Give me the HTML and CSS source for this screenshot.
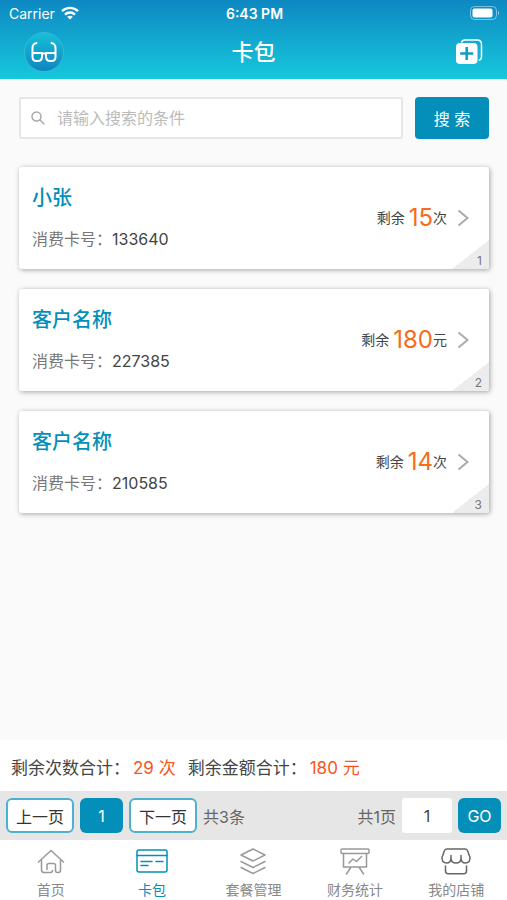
FILE: index.html
```html
<!DOCTYPE html>
<html lang="zh-CN">
<head>
    <meta charset="UTF-8">
    <meta name="viewport" content="width=device-width, initial-scale=1.0">
    <title>卡包</title>
    <link rel="stylesheet" href="styles.css">
</head>
<body>
    <header class="header">
        <div class="status-bar">
            <div class="carrier">
                <span>Carrier</span>
                <svg width="18" height="14" viewBox="0 0 18 14" fill="none" stroke="#fff" stroke-width="2.4">
                    <path d="M1 5.2C5.5 0.8 12.5 0.8 17 5.2"/>
                    <path d="M4 8.6C6.8 5.8 11.2 5.8 14 8.6"/>
                    <path d="M9 13.5L6.2 10.7C7.8 9.3 10.2 9.3 11.8 10.7Z" fill="#fff" stroke="none"/>
                </svg>
            </div>
            <span class="time">6:43 PM</span>
            <svg class="battery" width="30" height="14" viewBox="0 0 30 14">
                <rect x="0.5" y="0.5" width="26" height="13" rx="4" fill="none" stroke="#fff" stroke-opacity="0.45"/>
                <rect x="2.5" y="2.5" width="20" height="9" rx="2" fill="#fff"/>
                <path d="M28 5v4c1.6-0.6 1.6-3.4 0-4z" fill="#fff" fill-opacity="0.5"/>
            </svg>
        </div>
        <div class="nav-bar">
            <a class="logo" href="#" aria-label="首页">
                <svg width="28" height="24" viewBox="0 0 28 24" fill="none" stroke="#fff" stroke-width="2" stroke-linecap="round" stroke-linejoin="round">
                    <path d="M6.500 3C4 3.500 2.500 5 2.500 8v9c0 2.800 1.300 4 4 4h1c2.800 0 4.500-1.700 4.500-4.500v-3.500H2.500"/>
                    <path d="M21.500 3C24 3.500 25.500 5 25.500 8v9c0 2.800-1.300 4-4 4h-1c-2.800 0-4.500-1.700-4.500-4.500v-3.500h9.500M12 13.500h4"/>
                </svg>
            </a>
            <h1>卡包</h1>
            <button class="add-btn" type="button" aria-label="添加">
                <svg width="28" height="26" viewBox="0 0 28 26">
                    <path d="M6.500 3.500C7 1.700 8 1 10 1h12c3.200 0 4.500 1.300 4.500 4.500v12c0 2.200-0.800 3.400-2.700 3.700" fill="none" stroke="#fff" stroke-width="1.500"/>
                    <rect x="1" y="4" width="21.500" height="21" rx="4" fill="#fff"/>
                    <path d="M11.700 8v13M5.200 14.500h13" stroke="#119cc6" stroke-width="2.500"/>
                </svg>
            </button>
        </div>
    </header>

    <main class="content">
        <form class="search">
            <div class="search-box">
                <svg width="14" height="14" viewBox="0 0 14 14" fill="none" stroke="#aaa" stroke-width="1.500" stroke-linecap="round">
                    <circle cx="5.500" cy="5.500" r="4.500"/>
                    <path d="M9 9l4 4"/>
                </svg>
                <input type="text" placeholder="请输入搜索的条件" aria-label="搜索条件">
            </div>
            <button class="search-btn" type="button">搜 索</button>
        </form>

        <a class="card" href="#">
            <div class="info">
                <h2>小张</h2>
                <p>消费卡号：<span class="number">133640</span></p>
            </div>
            <div class="remain"><span>剩余</span><strong>15</strong><span>次</span></div>
            <svg class="arrow" width="12" height="18" viewBox="0 0 12 18"><path d="M1.500 1.500L10.500 9L1.500 16.500"/></svg>
            <span class="corner">1</span>
        </a>

        <a class="card" href="#">
            <div class="info">
                <h2>客户名称</h2>
                <p>消费卡号：<span class="number">227385</span></p>
            </div>
            <div class="remain"><span>剩余</span><strong>180</strong><span>元</span></div>
            <svg class="arrow" width="12" height="18" viewBox="0 0 12 18"><path d="M1.500 1.500L10.500 9L1.500 16.500"/></svg>
            <span class="corner">2</span>
        </a>

        <a class="card" href="#">
            <div class="info">
                <h2>客户名称</h2>
                <p>消费卡号：<span class="number">210585</span></p>
            </div>
            <div class="remain"><span>剩余</span><strong>14</strong><span>次</span></div>
            <svg class="arrow" width="12" height="18" viewBox="0 0 12 18"><path d="M1.500 1.500L10.500 9L1.500 16.500"/></svg>
            <span class="corner">3</span>
        </a>
    </main>

    <footer class="footer">
        <div class="summary">
            <span>剩余次数合计：<em>29 次</em></span>
            <span>剩余金额合计：<em>180 元</em></span>
        </div>

        <div class="pager">
            <button class="page-btn" type="button">上一页</button>
            <button class="page-current" type="button">1</button>
            <button class="page-btn" type="button">下一页</button>
            <span>共3条</span>
            <label class="page-total" for="page">共1页</label>
            <input id="page" type="text" value="1">
            <button class="go-btn" type="button">GO</button>
        </div>

        <nav class="tabs">
            <a class="tab" href="#">
                <svg width="32" height="28" viewBox="0 0 32 28">
                    <path d="M3.500 15L16 3.500l12.500 11.500M6.500 13v10c0 1.800 0.700 2.500 2.500 2.500h6.500c1.300 0 2-0.700 2-2M12 22.500v-4c0-1.300 0.500-2 2-2h4.500c1.500 0 2 0.700 2 2v5c0 1.300 0.700 2 2 2h1c1.500 0 2-0.700 2-2.500v-10"/>
                </svg>
                <span>首页</span>
            </a>
            <a class="tab active" href="#">
                <svg width="32" height="28" viewBox="0 0 32 28">
                    <rect x="1" y="3" width="30" height="22" rx="2"/>
                    <path d="M1 8.500h30M5 14.500h11M20 14.500h7M5 18.500h7"/>
                </svg>
                <span>卡包</span>
            </a>
            <a class="tab" href="#">
                <svg width="32" height="28" viewBox="0 0 32 28">
                    <path d="M16 2l12 6-12 6-12-6zM4 14.500l12 6 12-6M4 20.500l12 6 12-6"/>
                </svg>
                <span>套餐管理</span>
            </a>
            <a class="tab" href="#">
                <svg width="32" height="28" viewBox="0 0 32 28">
                    <rect x="2" y="2" width="28" height="4.500" rx="1"/>
                    <path d="M4.500 6.500V20h23V6.500M12 20l-4.500 7M20 20l4.500 7M10 16l4-4 3.500 2.500 5-5"/>
                </svg>
                <span>财务统计</span>
            </a>
            <a class="tab store" href="#">
                <svg width="32" height="28" viewBox="0 0 32 28">
                    <path d="M7 2h18c1.200 0 2 0.500 2.500 1.500L30 10.500c0 3.500-1.800 5.500-4.500 5.500-2.800 0-4.500-2-4.500-5V8.500M7 2c-1.200 0-2 0.500-2.500 1.500L2 10.500C2 14 3.800 16 6.500 16c2.800 0 4.500-2 4.500-5V8.500M11 11c0 3 2 5 5 5s5-2 5-5"/>
                    <path d="M5.500 19v5c0 1.800 1 2.700 2.700 2.700h15.600c1.700 0 2.700-0.900 2.700-2.700v-5"/>
                </svg>
                <span>我的店铺</span>
            </a>
        </nav>
    </footer>
</body>
</html>
```
FILE: styles.css
```css
* {
    box-sizing: border-box;
}

body {
    margin: 0;
    min-height: 100vh;
    display: flex;
    flex-direction: column;
    background-color: #fafafa;
    font-family: Inter, "Noto Sans CJK SC", sans-serif;
    font-size: 16px;
    color: #444;
}

a {
    color: inherit;
    text-decoration: none;
}

button, input {
    font-family: inherit;
    font-size: 16px;
    margin: 0;
    padding: 0;
    border: none;
}

button {
    cursor: pointer;
}

svg {
    display: block;
    flex-shrink: 0;
}

.header {
    background: linear-gradient(#0e88c2, #16c8dc);
    color: white;
    padding-bottom: 7px;
}

.status-bar {
    display: grid;
    grid-template-columns: 1fr auto 1fr;
    align-items: center;
    height: 26px;
    padding: 0 7px 0 9px;
    font-size: 14px;
}

.carrier {
    display: flex;
    align-items: center;
    gap: 6px;
}

.time {
    font-weight: 600;
}

.battery {
    justify-self: end;
}

.nav-bar {
    display: flex;
    align-items: center;
    justify-content: space-between;
    height: 46px;
    padding: 6px 24px 0;
}

.nav-bar h1 {
    margin: 0;
    font-size: 22px;
    font-weight: 500;
    line-height: 30px;
}

.logo {
    display: flex;
    align-items: center;
    justify-content: center;
    width: 40px;
    height: 40px;
    border: 1px solid #35b7d8;
    border-radius: 50%;
    background: linear-gradient(#18bfd8, #0f86bf);
}

.add-btn {
    display: flex;
    justify-content: flex-end;
    width: 40px;
    background: none;
}

.content {
    flex: 1;
    display: flex;
    flex-direction: column;
    gap: 20px;
    padding: 18px 18px 20px 19px;
}

.search {
    display: flex;
    gap: 12px;
    margin-bottom: 8px;
}

.search-box {
    flex: 1;
    display: flex;
    align-items: center;
    gap: 12px;
    height: 42px;
    padding: 0 10px;
    background-color: white;
    border: 2px solid #e6e6e6;
    border-radius: 3px;
}

.search-box input {
    flex: 1;
    min-width: 0;
    outline: none;
    background: none;
}

.search-box input::placeholder {
    color: #bbb;
}

.search-btn {
    width: 74px;
    height: 42px;
    background-color: #048fba;
    border-radius: 4px;
    color: white;
}

.card {
    position: relative;
    display: flex;
    align-items: center;
    height: 102px;
    padding: 0 20px 0 13px;
    background-color: white;
    border-radius: 3px;
    box-shadow: 1px 1px 5px rgba(0, 0, 0, 0.35);
}

.info {
    flex: 1;
}

.info h2 {
    margin: 0 0 16px;
    font-size: 20px;
    font-weight: 500;
    line-height: 26px;
    color: #048fba;
}

.info p {
    margin: 0;
    line-height: 24px;
    color: #777;
}

.info .number {
    color: #444;
}

.remain {
    display: flex;
    align-items: center;
    margin-right: 10px;
    font-size: 14px;
    line-height: 30px;
}

.remain strong {
    margin-left: 4px;
    font-size: 24px;
    font-weight: 400;
    color: #f76b1c;
}

.arrow {
    fill: none;
    stroke: #aaa;
    stroke-width: 2;
}

/* folded corner with the row number */
.corner {
    position: absolute;
    right: 0;
    bottom: 0;
    width: 37px;
    height: 29px;
    padding: 13px 7px 0 0;
    background: linear-gradient(to bottom right, transparent 50%, #ececec 50%);
    border-bottom-right-radius: 3px;
    font-size: 12px;
    line-height: 16px;
    text-align: right;
    color: #777;
}

.summary {
    display: flex;
    gap: 12px;
    padding: 16px 11px 11px;
    background-color: white;
    font-size: 17px;
    line-height: 24px;
}

.summary em {
    margin-left: 3px;
    font-style: normal;
    color: #fa541c;
}

.pager {
    display: flex;
    align-items: center;
    gap: 6px;
    height: 49px;
    padding: 0 6px;
    background-color: #e6e6e6;
    color: #666;
}

.pager button {
    height: 35px;
    border-radius: 6px;
}

.pager .page-btn {
    width: 68px;
    background-color: white;
    border: 2px solid #4fb1cf;
    color: #333;
}

.pager .page-current, .pager .go-btn {
    width: 43px;
    background-color: #048fba;
    color: white;
}

.page-total {
    margin-left: auto;
}

.pager input {
    width: 50px;
    height: 35px;
    background-color: white;
    border-radius: 3px;
    text-align: center;
    color: #444;
}

.tabs {
    display: grid;
    grid-template-columns: repeat(5, 1fr);
    padding: 7px 0 0;
    background-color: white;
}

.tab {
    display: flex;
    flex-direction: column;
    align-items: center;
    gap: 5px;
    font-size: 14px;
    line-height: 20px;
    color: #888;
}

.tab svg {
    fill: none;
    stroke: #999;
    stroke-width: 1.5;
    stroke-linecap: round;
    stroke-linejoin: round;
}

.tab.store svg {
    stroke: #666;
}

.tab.active {
    color: #048fba;
}

.tab.active svg {
    stroke: #048fba;
}
```
